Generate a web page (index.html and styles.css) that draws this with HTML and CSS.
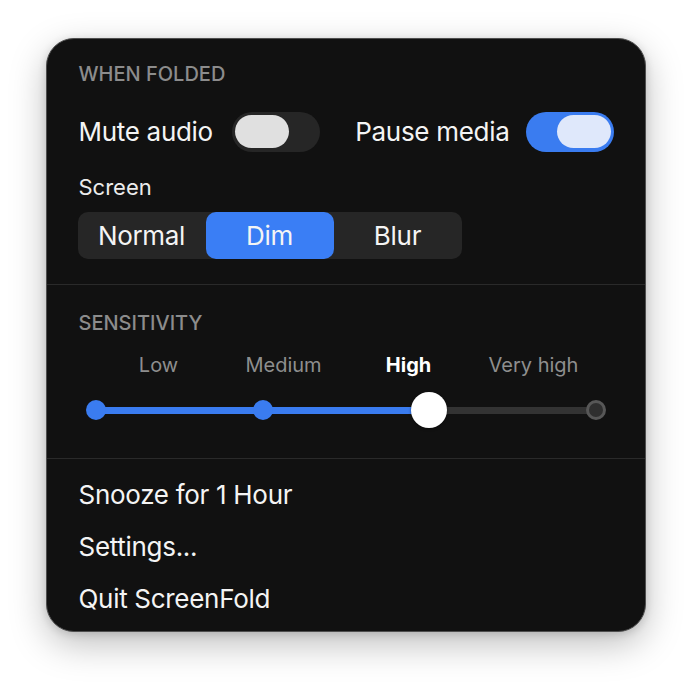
FILE: index.html
```html
<!DOCTYPE html>
<html>
<head>
<meta charset="utf-8">
<link rel="stylesheet" href="styles.css">
</head>
<body>
<div class="panel">
  <section class="sec sec-folded">
    <div class="heading">WHEN FOLDED</div>
    <div class="toggles">
      <div class="tg-group">
        <span class="tg-label">Mute audio</span>
        <span class="switch"><span class="knob"></span></span>
      </div>
      <div class="tg-group">
        <span class="tg-label">Pause media</span>
        <span class="switch on"><span class="knob"></span></span>
      </div>
    </div>
    <div class="sublabel">Screen</div>
    <div class="segmented">
      <div class="seg">Normal</div>
      <div class="seg active">Dim</div>
      <div class="seg">Blur</div>
    </div>
  </section>
  <section class="sec sec-sens">
    <div class="heading">SENSITIVITY</div>
    <div class="slider-wrap">
      <div class="levels">
        <span class="lvl">Low</span>
        <span class="lvl">Medium</span>
        <span class="lvl current">High</span>
        <span class="lvl">Very high</span>
      </div>
      <div class="slider">
        <div class="track"><div class="fill" style="width:66.667%"></div></div>
        <span class="dot" style="left:0%"></span>
        <span class="dot" style="left:33.333%"></span>
        <span class="thumb" style="left:66.667%"></span>
        <span class="dot empty" style="left:100%"></span>
      </div>
    </div>
  </section>
  <section class="sec sec-menu">
    <div class="item">Snooze for 1 Hour</div>
    <div class="item">Settings...</div>
    <div class="item">Quit ScreenFold</div>
  </section>
</div>
</body>
</html>
```
FILE: styles.css
```css
* { box-sizing: border-box; }
html, body { margin: 0; padding: 0; background: #ffffff; }
body {
  min-height: 686px;
  padding: 38px 0 0 46px;
  font-family: Inter, "Noto Sans", "Liberation Sans", sans-serif;
  color: #f4f4f4;
}
.panel {
  width: 600px;
  height: 594px;
  background: #111111;
  border: 1.5px solid #4f4f4f;
  border-radius: 28px;
  box-shadow: 0 12px 36px rgba(0,0,0,0.26), 0 2px 8px rgba(0,0,0,0.14);
  overflow: hidden;
  display: flex;
  flex-direction: column;
}
.sec { padding: 0 31.5px; }
.sec-folded { height: 246px; padding-top: 23px; border-bottom: 1px solid #2a2a2a; }
.sec-sens { height: 174px; padding-top: 26px; border-bottom: 1px solid #2a2a2a; }
.sec-menu { flex: 1; padding-top: 10px; }

.heading {
  height: 24px;
  line-height: 24px;
  font-size: 20px;
  font-weight: 500;
  color: #8c8c8c;
}
.toggles {
  margin-top: 25.5px;
  height: 40px;
  display: flex;
  justify-content: space-between;
  align-items: center;
}
.tg-group { display: flex; align-items: center; }
.tg-group + .tg-group .switch { margin-left: 16px; }
.tg-label { font-size: 26px; line-height: 40px; letter-spacing: -0.3px; color: #f4f4f4; }
.switch {
  margin-left: 19px;
  width: 88px;
  height: 40px;
  border-radius: 20px;
  background: #262626;
  display: flex;
  align-items: center;
  padding: 0 3px;
}
.switch .knob {
  width: 54px;
  height: 33px;
  border-radius: 17px;
  background: #e0e0e0;
}
.switch.on { background: #3a7cf0; justify-content: flex-end; }
.switch.on .knob { background: #dfe8fb; }

.sublabel {
  margin-top: 24px;
  height: 22px;
  line-height: 22px;
  font-size: 22px;
  color: #ececec;
}
.segmented {
  margin-top: 14px;
  margin-left: -1px;
  width: 384px;
  height: 47px;
  background: #262626;
  border-radius: 10px;
  display: flex;
}
.seg {
  flex: 1;
  display: flex;
  align-items: center;
  justify-content: center;
  font-size: 26px;
  letter-spacing: -0.3px;
  color: #f4f4f4;
  border-radius: 10px;
}
.seg.active { background: #3a7ef5; }

.slider-wrap { padding: 0 17.5px 0 17.5px; }
.levels {
  margin-top: 16px;
  display: grid;
  grid-template-columns: repeat(4, 1fr);
  height: 28px;
  line-height: 28px;
}
.lvl {
  text-align: center;
  font-size: 20px;
  color: #8e8e8e;
}
.lvl.current { color: #ffffff; font-weight: 700; }
.slider {
  position: relative;
  margin-top: 13px;
  height: 36px;
  display: flex;
  align-items: center;
}
.track {
  width: 100%;
  height: 7px;
  border-radius: 4px;
  background: #333333;
}
.fill { height: 100%; background: #3a7cf0; border-radius: 4px 0 0 4px; }
.dot, .thumb {
  position: absolute;
  top: 50%;
  transform: translate(-50%, -50%);
  border-radius: 50%;
}
.dot { width: 20px; height: 20px; background: #3a7cf0; }
.dot.empty { background: #2f2f2f; border: 3px solid #575757; }
.thumb { width: 36px; height: 36px; background: #ffffff; box-shadow: 0 1px 3px rgba(0,0,0,0.4); }

.item {
  height: 52px;
  line-height: 52px;
  font-size: 26px;
  letter-spacing: -0.3px;
  color: #f4f4f4;
}
```
